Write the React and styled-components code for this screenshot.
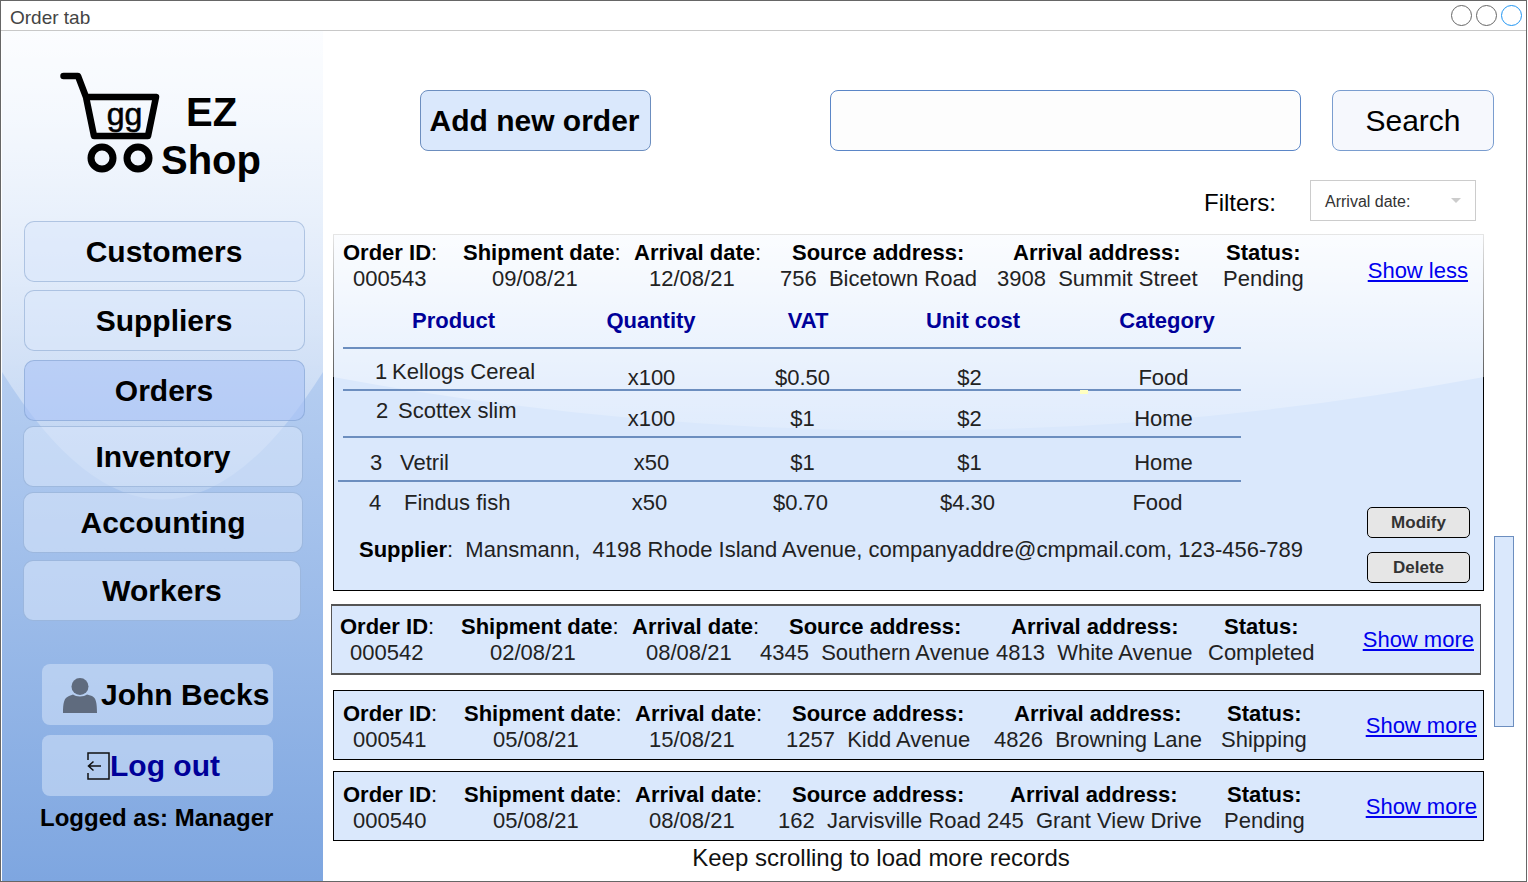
import React from 'react'
import styled, { createGlobalStyle } from 'styled-components'

const orders = [
  {
    id: '000542',
    shipment: '02/08/21',
    arrival: '08/08/21',
    source: '4345  Southern Avenue',
    target: '4813  White Avenue',
    status: 'Completed',
    x: 331,
    width: 1150,
    top: 13,
    height: 71,
    labelLefts: [340, 461, 632, 789, 1011, 1224],
    valueLefts: [350, 490, 646, 760, 996, 1208],
    strong: true,
  },
  {
    id: '000541',
    shipment: '05/08/21',
    arrival: '15/08/21',
    source: '1257  Kidd Avenue',
    target: '4826  Browning Lane',
    status: 'Shipping',
    x: 333,
    width: 1151,
    top: 15,
    height: 70,
    labelLefts: [343, 464, 635, 792, 1014, 1227],
    valueLefts: [353, 493, 649, 786, 994, 1221],
    padTop: 4,
    linkDrop: -2,
  },
  {
    id: '000540',
    shipment: '05/08/21',
    arrival: '08/08/21',
    source: '162  Jarvisville Road',
    target: '245  Grant View Drive',
    status: 'Pending',
    x: 333,
    width: 1151,
    top: 11,
    height: 70,
    labelLefts: [343, 464, 635, 792, 1010, 1227],
    valueLefts: [353, 493, 649, 778, 987, 1224],
    padTop: 4,
    linkDrop: -2,
  },
]

const products = [
  { num: '1', name: 'Kellogs Cereal', pad: 32, numWidth: 17, qty: 'x100', vat: '$0.50', cost: '$2', category: 'Food', height: 40, bottom: -2, rise: 6, shift: 1, catShift: 11 },
  { num: '2', name: 'Scottex slim', pad: 33, numWidth: 22, qty: 'x100', vat: '$1', cost: '$2', category: 'Home', height: 45, bottom: 4, rise: 8, shift: 1, catShift: 11 },
  { num: '3', name: 'Vetril', pad: 27, numWidth: 30, qty: 'x50', vat: '$1', cost: '$1', category: 'Home', height: 42, bottom: 4, rise: 0, shift: 1, catShift: 11 },
  { num: '4', name: 'Findus fish', pad: 26, numWidth: 35, qty: 'x50', vat: '$0.70', cost: '$4.30', category: 'Food', height: 33, bottom: -1, rise: 0, shift: -3, catShift: -1 },
]

const navItems = [
  { label: 'Customers', left: 22, width: 281, gap: 0, nudge: 1 },
  { label: 'Suppliers', left: 22, width: 281, gap: 8, nudge: 1 },
  { label: 'Orders', left: 22, width: 281, gap: 9, nudge: 1, active: true },
  { label: 'Inventory', left: 21, width: 280, gap: 5 },
  { label: 'Accounting', left: 21, width: 280, gap: 5 },
  { label: 'Workers', left: 21, width: 278, gap: 7 },
]

// turn absolute left edges into grid column widths
const columnsFrom = (lefts) =>
  lefts.slice(1).map((left, i) => `${left - lefts[i]}px`).join(' ') + ' auto'

function Field({ name, colon = ':', thinColon }) {
  return (
    <Label>
      {name}
      {thinColon ? <Thin>{colon}</Thin> : colon}
    </Label>
  )
}

function OrderHead({ order, cardLeft }) {
  return (
    <HeadRows>
      <InfoRow $cols={columnsFrom(order.labelLefts)} $pad={order.labelLefts[0] - cardLeft}>
        <Field name="Order ID" thinColon />
        <Field name="Shipment date" thinColon />
        <Field name="Arrival date" thinColon />
        <Field name="Source address" />
        <Field name="Arrival address" />
        <Field name="Status" />
      </InfoRow>
      <InfoRow $cols={columnsFrom(order.valueLefts)} $pad={order.valueLefts[0] - cardLeft}>
        <Value>{order.id}</Value>
        <Value>{order.shipment}</Value>
        <Value>{order.arrival}</Value>
        <Value>{order.source}</Value>
        <Value>{order.target}</Value>
        <Value>{order.status}</Value>
      </InfoRow>
    </HeadRows>
  )
}

function Cart() {
  return (
    <CartSvg viewBox="60 70 100 104">
      <path d="M63.5 76 H78 L86 97 L94 136 H148 L156 97 H86" fill="none" stroke="#000" strokeWidth="6.5" strokeLinejoin="round" strokeLinecap="round" />
      <circle cx="102" cy="158" r="11" fill="none" stroke="#000" strokeWidth="7" />
      <circle cx="138" cy="158" r="11" fill="none" stroke="#000" strokeWidth="7" />
      <text x="124.5" y="125" textAnchor="middle" fontFamily="Liberation Sans" fontSize="32" fill="#000" stroke="#000" strokeWidth="0.6">gg</text>
    </CartSvg>
  )
}

function UserIcon() {
  return (
    <svg width="34" height="36" viewBox="0 0 34 36">
      <circle cx="17" cy="9.5" r="8.5" fill="#5f6b7e" />
      <path d="M0 36 C0 26 1 21 6 19 L10 17.5 C13 20 21 20 24 17.5 L29 19 C33 21 34 26 34 36 Z" fill="#5f6b7e" />
    </svg>
  )
}

function LogoutIcon() {
  return (
    <svg width="23" height="28" viewBox="0 0 23 28">
      <path d="M1 8 V1 H22 V27 H1 V21" fill="none" stroke="#111" strokeWidth="1.5" />
      <path d="M14 14 H1.5 M6.5 9.5 L1.5 14 L6.5 18.5" fill="none" stroke="#111" strokeWidth="1.5" />
    </svg>
  )
}

export default function App() {
  return (
    <Frame>
      <GlobalStyle />
      <TitleBar>
        <TitleText>Order tab</TitleText>
        <WindowDots>
          <Dot />
          <Dot />
          <Dot $blue />
        </WindowDots>
      </TitleBar>

      <Body>
        <Sidebar>
          <Logo>
            <Cart />
            <LogoText>
              <LogoEz>EZ</LogoEz>
              <LogoShop>Shop</LogoShop>
            </LogoText>
          </Logo>

          <Nav>
            {navItems.map((item) => (
              <NavButton
                key={item.label}
                $left={item.left}
                $width={item.width}
                $gap={item.gap}
                $nudge={item.nudge}
                $active={item.active}
              >
                {item.label}
              </NavButton>
            ))}
          </Nav>

          <UserCard>
            <UserIcon />
            John Becks
          </UserCard>
          <LogoutCard>
            <LogoutIcon />
            Log out
          </LogoutCard>
          <LoggedAs>Logged as: Manager</LoggedAs>
        </Sidebar>

        <Main>
          <Toolbar>
            <AddButton>Add new order</AddButton>
            <SearchInput />
            <SearchButton>Search</SearchButton>
          </Toolbar>

          <FilterRow>
            <FilterLabel>Filters:</FilterLabel>
            <FilterSelect>
              Arrival date:
              <Caret />
            </FilterSelect>
          </FilterRow>

          <ExpandedCard>
            <CardHead>
              <OrderHead
                cardLeft={334}
                order={{
                  id: '000543',
                  shipment: '09/08/21',
                  arrival: '12/08/21',
                  source: '756  Bicetown Road',
                  target: '3908  Summit Street',
                  status: 'Pending',
                  labelLefts: [343, 463, 634, 792, 1013, 1226],
                  valueLefts: [353, 492, 649, 780, 997, 1223],
                }}
              />
              <ShowLink $right={15} $drop={10} href="#">Show less</ShowLink>
            </CardHead>

            <CardBody>
              <Details>
                <TableHead>
                  <HeadCell $align="left" $shift={69}>Product</HeadCell>
                  <HeadCell>Quantity</HeadCell>
                  <HeadCell $shift={12}>VAT</HeadCell>
                  <HeadCell $shift={8}>Unit cost</HeadCell>
                  <HeadCell $shift={18}>Category</HeadCell>
                </TableHead>
                <Rule />
                {products.map((p, i) => (
                  <React.Fragment key={p.num}>
                    <TableRow $height={p.height} $bottom={p.bottom}>
                      <ProductCell $pad={p.pad} $rise={p.rise}>
                        <ProductNum $width={p.numWidth}>{p.num}</ProductNum>
                        {p.name}
                      </ProductCell>
                      <Cell $shift={p.shift}>{p.qty}</Cell>
                      <Cell $shift={p.shift}>{p.vat}</Cell>
                      <Cell $shift={p.shift}>{p.cost}</Cell>
                      <Cell $shift={p.catShift}>{p.category}</Cell>
                    </TableRow>
                    {i < 3 && <Rule $out={i === 2 ? 5 : 0} />}
                  </React.Fragment>
                ))}
                <Supplier>
                  <strong>Supplier</strong>:  Mansmann,  4198 Rhode Island Avenue, companyaddre@cmpmail.com, 123-456-789
                </Supplier>
              </Details>
              <Actions>
                <ActionButton>Modify</ActionButton>
                <ActionButton>Delete</ActionButton>
              </Actions>
            </CardBody>
            <Speck />
          </ExpandedCard>

          {orders.map((order) => (
            <OrderCard
              key={order.id}
              $left={order.x - 333}
              $width={order.width}
              $top={order.top}
              $height={order.height}
              $pad={order.padTop}
              $strong={order.strong}
            >
              <OrderHead order={order} cardLeft={order.x + 1} />
              <ShowLink $right={6} $drop={order.linkDrop} href="#">Show more</ShowLink>
            </OrderCard>
          ))}

          <ScrollHint>Keep scrolling to load more records</ScrollHint>
          <ScrollThumb />
        </Main>
      </Body>
    </Frame>
  )
}

const GlobalStyle = createGlobalStyle`
  html, body {
    margin: 0;
    padding: 0;
    background: #fff;
  }
  * {
    box-sizing: border-box;
  }
`

const Frame = styled.div`
  width: 1527px;
  height: 882px;
  border: 1px solid #666;
  overflow: hidden;
  font-family: "Liberation Sans", Arial, sans-serif;
  color: #000;
  display: flex;
  flex-direction: column;
`

const TitleBar = styled.div`
  height: 30px;
  flex: none;
  display: flex;
  align-items: center;
  justify-content: space-between;
  padding: 0 4px 0 9px;
  border-bottom: 1px solid #c8c8c8;
  font-size: 19px;
  color: #444;
`

const TitleText = styled.span`
  padding-top: 4px;
`

const WindowDots = styled.div`
  display: flex;
  gap: 4px;
`

const Dot = styled.span`
  width: 21px;
  height: 21px;
  border-radius: 50%;
  border: 1px solid ${(p) => (p.$blue ? '#2196f3' : '#666')};
`

const Body = styled.div`
  flex: 1;
  display: flex;
  min-height: 0;
`

const Sidebar = styled.aside`
  position: relative;
  isolation: isolate;
  margin-left: 1px;
  width: 321px;
  flex: none;
  padding-top: 39px;
  background: linear-gradient(#dae8fc, #7ea6e0);

  &::before {
    content: '';
    position: absolute;
    inset: 0;
    z-index: -1;
    background: linear-gradient(rgba(255, 255, 255, 0.9), rgba(255, 255, 255, 0.1) 60%);
    clip-path: path('M0 0 H321 V341 Q160 596 0 341 Z');
  }
`

const Logo = styled.div`
  display: flex;
  gap: 1px;
  padding-left: 58px;
  margin-bottom: 41px;
`

const CartSvg = styled.svg`
  width: 100px;
  height: 104px;
  flex: none;
`

const LogoText = styled.div`
  display: flex;
  flex-direction: column;
  padding-top: 22px;
  font-weight: bold;
  font-size: 40px;
  line-height: 40px;
`

const LogoEz = styled.div`
  padding-left: 25px;
  margin-bottom: 8px;
`

const LogoShop = styled.div``

const Nav = styled.nav`
  display: flex;
  flex-direction: column;
`

const NavButton = styled.button`
  height: 61px;
  width: ${(p) => p.$width}px;
  margin: ${(p) => p.$gap}px 0 0 ${(p) => p.$left}px;
  padding: 0 ${(p) => p.$nudge || 0}px 0 0;
  border-radius: 10px;
  border: 1px solid rgba(108, 142, 191, 0.42);
  background: ${(p) => (p.$active ? 'rgba(170, 195, 247, 0.6)' : 'rgba(218, 232, 252, 0.55)')};
  font: bold 30px "Liberation Sans", Arial, sans-serif;
  color: #000;
`

const SideCard = styled.div`
  width: 231px;
  height: 61px;
  margin-left: 40px;
  display: flex;
  align-items: center;
  border-radius: 8px;
  background: rgba(218, 232, 252, 0.5);
  font-weight: bold;
  font-size: 30px;
  white-space: nowrap;
`

const UserCard = styled(SideCard)`
  margin-top: 43px;
  padding-left: 21px;
  gap: 4px;
`

const LogoutCard = styled(SideCard)`
  margin-top: 10px;
  padding-left: 45px;
  gap: 0;
  color: #000099;
`

const LoggedAs = styled.div`
  margin: 8px 0 0 38px;
  font-weight: bold;
  font-size: 24px;
  line-height: 27px;
  white-space: nowrap;
`

const Main = styled.main`
  position: relative;
  flex: 1;
  min-width: 0;
  padding-left: 10px;
`

const Toolbar = styled.div`
  display: flex;
  align-items: stretch;
  height: 61px;
  margin-top: 59px;
  padding-left: 87px;
`

const AddButton = styled.button`
  width: 231px;
  padding: 0 2px 0 0;
  border-radius: 8px;
  border: 1px solid #6c8ebf;
  background: #dae8fc;
  font: bold 30px "Liberation Sans", Arial, sans-serif;
  color: #000;
`

const SearchInput = styled.input`
  width: 471px;
  margin-left: 179px;
  border-radius: 8px;
  border: 1px solid #5b86c7;
  background: #fdfdfd;
`

const SearchButton = styled.button`
  width: 162px;
  margin-left: 31px;
  padding: 0;
  border-radius: 8px;
  border: 1px solid #7a9dcf;
  background: #f6f8fd;
  font: 30px "Liberation Sans", Arial, sans-serif;
  color: #000;
`

const FilterRow = styled.div`
  display: flex;
  align-items: center;
  height: 41px;
  margin: 29px 0 13px;
  padding-left: 871px;
`

const FilterLabel = styled.div`
  width: 106px;
  padding-top: 4px;
  font-size: 24px;
`

const FilterSelect = styled.div`
  position: relative;
  width: 166px;
  height: 41px;
  display: flex;
  align-items: center;
  padding: 2px 0 0 14px;
  border: 1px solid #ccc;
  font-size: 16px;
  color: #333;
`

const Caret = styled.span`
  position: absolute;
  right: 14px;
  top: 17px;
  border-left: 5.5px solid transparent;
  border-right: 5.5px solid transparent;
  border-top: 5px solid #ccc;
`

const ExpandedCard = styled.section`
  position: relative;
  isolation: isolate;
  width: 1151px;
  height: 357px;
  border: 1px solid #000;
  background: #dae8fc;
  display: flex;
  flex-direction: column;

  &::before {
    content: '';
    position: absolute;
    inset: -1px;
    z-index: -1;
    background: linear-gradient(rgba(255, 255, 255, 0.9), rgba(255, 255, 255, 0.1) 60%);
    clip-path: path('M0 0 H1151 V143 Q575 250 0 143 Z');
  }
`

const CardHead = styled.div`
  display: flex;
  align-items: center;
  padding-top: 5px;
`

const HeadRows = styled.div`
  flex: 1;
  min-width: 0;
`

const InfoRow = styled.div`
  display: grid;
  grid-template-columns: ${(p) => p.$cols};
  padding-left: ${(p) => p.$pad}px;
  height: 26px;
  line-height: 26px;
  font-size: 22px;
  white-space: pre;
`

const Label = styled.div`
  font-weight: bold;
`

const Thin = styled.span`
  font-weight: normal;
`

const Value = styled.div`
  color: #222;
`

const ShowLink = styled.a`
  flex: none;
  font-size: 22px;
  color: #0000ee;
  text-decoration: underline;
  padding-right: ${(p) => p.$right}px;
  margin-top: ${(p) => p.$drop || 0}px;
`

const CardBody = styled.div`
  flex: 1;
  display: flex;
  justify-content: space-between;
  padding: 16px 13px 0 9px;
`

const Details = styled.div`
  width: 898px;
`

const gridColumns = '218px 180px 122px 212px 166px'

const shiftPadding = (s = 0) => `0 ${Math.max(0, -s)}px 0 ${Math.max(0, s)}px`

const TableHead = styled.div`
  display: grid;
  grid-template-columns: ${gridColumns};
  height: 26px;
  margin-bottom: 13px;
  line-height: 26px;
`

const HeadCell = styled.div`
  font-size: 22px;
  font-weight: bold;
  color: #000099;
  white-space: nowrap;
  text-align: ${(p) => p.$align || 'center'};
  padding: ${(p) => shiftPadding(p.$shift)};
`

const Rule = styled.div`
  height: 2px;
  margin-left: ${(p) => -(p.$out || 0)}px;
  background: #6c8ebf;
`

const TableRow = styled.div`
  display: grid;
  grid-template-columns: ${gridColumns};
  align-items: end;
  height: ${(p) => p.$height}px;
  font-size: 22px;
  line-height: 26px;
  color: #222;

  > * {
    margin-bottom: ${(p) => p.$bottom}px;
  }
`

const Cell = styled.div`
  text-align: center;
  white-space: nowrap;
  padding: ${(p) => shiftPadding(p.$shift)};
`

const ProductCell = styled.div`
  display: flex;
  white-space: nowrap;
  padding-left: ${(p) => p.$pad}px;
  padding-bottom: ${(p) => p.$rise}px;
`

const ProductNum = styled.span`
  width: ${(p) => p.$width}px;
  flex: none;
`

const Supplier = styled.div`
  margin: 22px 0 0 16px;
  font-size: 22px;
  line-height: 26px;
  color: #222;
  white-space: pre;

  strong {
    color: #000;
  }
`

const Actions = styled.div`
  display: flex;
  flex-direction: column;
  justify-content: flex-end;
  gap: 14px;
  padding-bottom: 7px;
`

const ActionButton = styled.button`
  width: 103px;
  height: 31px;
  padding: 0;
  border-radius: 5px;
  border: 1px solid #000;
  background: #e6e6e6;
  font: bold 17px "Liberation Sans", Arial, sans-serif;
  color: #333;
`

const Speck = styled.span`
  position: absolute;
  left: 746px;
  top: 155px;
  width: 8px;
  height: 4px;
  background: #ffffc0;
`

const OrderCard = styled.section`
  display: flex;
  align-items: center;
  width: ${(p) => p.$width}px;
  height: ${(p) => p.$height}px;
  margin: ${(p) => p.$top}px 0 0 ${(p) => p.$left}px;
  padding-top: ${(p) => p.$pad || 0}px;
  border: ${(p) => (p.$strong ? '2px solid #555' : '1px solid #000')};
  border-width: ${(p) => (p.$strong ? '2px 1px' : '1px')};
  background: #dae8fc;
`

const ScrollHint = styled.div`
  margin-top: 3px;
  width: 1096px;
  text-align: center;
  font-size: 24px;
  line-height: 28px;
  color: #111;
`

const ScrollThumb = styled.div`
  position: absolute;
  left: 1171px;
  top: 505px;
  width: 20px;
  height: 191px;
  border: 1px solid #6c8ebf;
  background: #dae8fc;
`
